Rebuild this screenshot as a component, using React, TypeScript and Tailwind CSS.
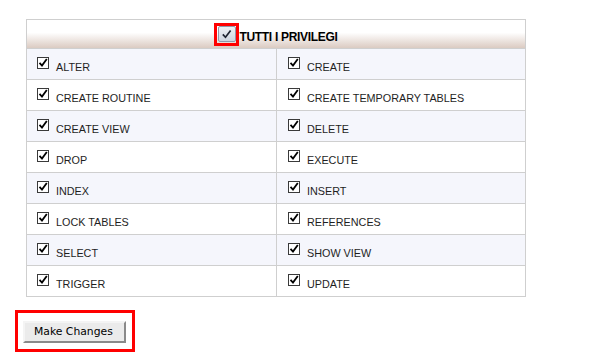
import React from "react";

const rows: [string, string][] = [
  ["ALTER", "CREATE"],
  ["CREATE ROUTINE", "CREATE TEMPORARY TABLES"],
  ["CREATE VIEW", "DELETE"],
  ["DROP", "EXECUTE"],
  ["INDEX", "INSERT"],
  ["LOCK TABLES", "REFERENCES"],
  ["SELECT", "SHOW VIEW"],
  ["TRIGGER", "UPDATE"],
];

function SmallCheck() {
  return (
    <span className="mt-[8px] flex h-[12px] w-[12px] shrink-0 items-center justify-center border border-[#3a3a3a] bg-white">
      <svg width="10" height="10" viewBox="0 0 10 10">
        <path d="M1.5 4.8 L4 7.6 L8.8 1" fill="none" stroke="#000" strokeWidth="1.8" />
      </svg>
    </span>
  );
}

function Cell({ label, right }: { label: string; right?: boolean }) {
  return (
    <div
      className={
        right
          ? "flex h-[30px] flex-1 items-start pl-[11px]"
          : "flex h-[30px] w-[250px] items-start border-r border-[#cfcfcf] pl-[10px]"
      }
    >
      <SmallCheck />
      <span className="ml-[7px] mt-[12px] text-[10.8px] leading-[13px] text-[#1e1e1e]">{label}</span>
    </div>
  );
}

export default function App() {
  return (
    <div
      className="min-h-[353px] bg-white pl-[15px] pt-[19px]"
      style={{ fontFamily: '"Liberation Sans", Arial, sans-serif' }}
    >
      <div className="ml-[11px] w-[500px] border border-[#cfcfcf]">
        <div className="flex h-[28px] items-center justify-center bg-linear-to-b from-white from-45% to-[#dbcbc2]">
          <span className="flex h-[23px] w-[25px] items-center justify-center border-[3px] border-[#ff0000]">
            <span className="flex h-[16px] w-[18px] items-center justify-center rounded-[2px] border border-[#8e99ab] bg-linear-to-b from-[#eef1f5] to-[#cdd4de]">
              <svg width="11" height="11" viewBox="0 0 11 11">
                <path d="M1.8 5.4 L4.5 8.3 L9.6 1.6" fill="none" stroke="#1d2330" strokeWidth="1.7" />
              </svg>
            </span>
          </span>
          <span className="pt-[5px] text-[12px] font-bold leading-[14px] tracking-[-0.3px] text-black">
            TUTTI I PRIVILEGI
          </span>
        </div>
        {rows.map(([a, b], i) => (
          <div
            key={a}
            className={
              i % 2 === 0
                ? "flex border-t border-[#cfcfcf] bg-[#f5f6fc]"
                : "flex border-t border-[#cfcfcf] bg-white"
            }
          >
            <Cell label={a} />
            <Cell label={b} right />
          </div>
        ))}
      </div>
      <div className="mt-[13px] w-[120px] border-[3px] border-[#ff0000] pb-[6px] pl-[5px] pt-[8px]">
        <button
          className="flex h-[22px] w-[103px] items-center border-2 border-b-[#8a8a8a] border-l-[#f4f4f4] border-r-[#8a8a8a] border-t-[#f4f4f4] bg-[#ebebeb] pl-[9px] text-[10.8px] leading-[12px] text-black"
          style={{ fontFamily: '"DejaVu Sans", Verdana, sans-serif' }}
        >
          Make Changes
        </button>
      </div>
    </div>
  );
}
